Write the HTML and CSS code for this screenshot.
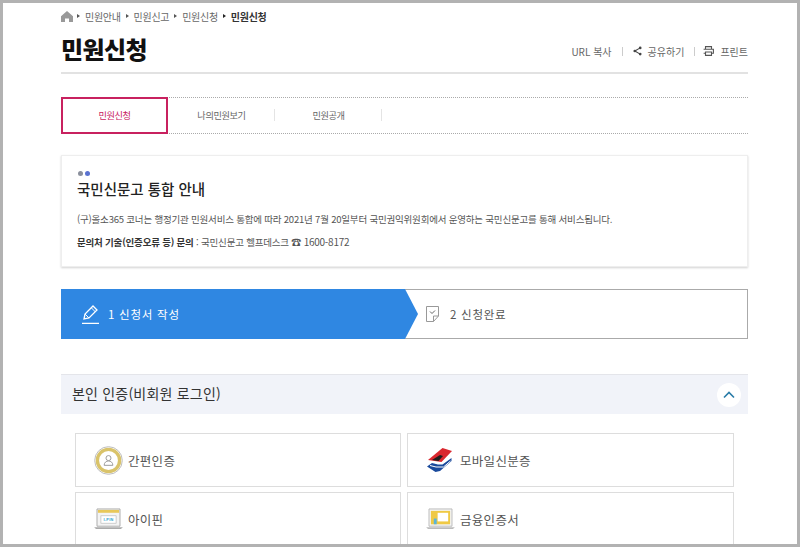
FILE: index.html
```html
<!DOCTYPE html>
<html lang="ko">
<head>
<meta charset="utf-8">
<title>민원신청</title>
<link rel="stylesheet" href="styles.css">
</head>
<body>
<div class="frame">
  <div class="page">
    <nav class="crumbs">
      <svg class="home" viewBox="0 0 12 11" width="12" height="11"><path d="M6 0 0 5.2V11h4V7.5h4V11h4V5.2z" fill="#999"/></svg>
      <span class="tri"></span><span>민원안내</span>
      <span class="tri"></span><span>민원신고</span>
      <span class="tri"></span><span>민원신청</span>
      <span class="tri dark"></span><strong>민원신청</strong>
    </nav>
    <header class="head">
      <h1>민원신청</h1>
      <div class="tools">
        <span>URL 복사</span><i class="sep"></i>
        <svg viewBox="0 0 10 10" width="9" height="10"><path d="M8 1.5 2 5l6 3.5" fill="none" stroke="#444" stroke-width="1.2"/><circle cx="8" cy="1.6" r="1.5" fill="#444"/><circle cx="2" cy="5" r="1.5" fill="#444"/><circle cx="8" cy="8.4" r="1.5" fill="#444"/></svg>
        <span class="lbl">공유하기</span><i class="sep tight"></i>
        <svg viewBox="0 0 11 10" width="11" height="10"><path d="M2.5 3V.6h6V3M.6 3.2h9.8v4H8.5M.6 7.2h1.9M2.5 6h6v3.4h-6z" fill="none" stroke="#555" stroke-width="1.1"/></svg>
        <span class="lbl">프린트</span>
      </div>
    </header>
    <div class="tabs">
      <a class="tab on">민원신청</a>
      <a class="tab">나의민원보기</a>
      <a class="tab">민원공개</a>
    </div>
    <section class="notice">
      <div class="dots"><i></i><i class="blue"></i></div>
      <h2>국민신문고 통합 안내</h2>
      <p>(구)올소365 코너는 행정기관 민원서비스 통합에 따라 2021년 7월 20일부터 국민권익위원회에서 운영하는 국민신문고를 통해 서비스됩니다.</p>
      <p class="ask"><b>문의처 기술(인증오류 등) 문의</b> : 국민신문고 헬프데스크 <span class="tel">☎ 1600-8172</span></p>
    </section>
    <div class="steps">
      <div class="step now">
        <svg viewBox="0 0 18 19" width="18" height="19"><path d="M0 18.3h17" fill="none" stroke="#fff" stroke-width="1.3"/><path d="M2 14l1-5L11 1l4 4-8 8z" fill="none" stroke="#fff" stroke-width="1.3"/><path d="M9.5 3l4 4M3 9l4 4" stroke="#fff"/></svg>
        <span>1 신청서 작성</span>
      </div>
      <div class="step next">
        <svg viewBox="0 0 13 16" width="13" height="16"><path d="M.5.5h12v9.5L7.5 15.5H.5z" fill="none" stroke="#999"/><path d="M7.5 15.5V10H12.500" fill="none" stroke="#999"/><path d="M4 5.500l2 2 3-3" fill="none" stroke="#666"/></svg>
        <span>2 신청완료</span>
      </div>
    </div>
    <div class="acc">
      <span class="acc-title">본인 인증(비회원 로그인)</span>
      <span class="acc-btn"><svg viewBox="0 0 12 8" width="12" height="8"><path d="M1 6.500 6 1.500l5 5" fill="none" stroke="#2a7ca8" stroke-width="1.6"/></svg></span>
    </div>
    <div class="opts">
      <a class="opt">
        <span class="slot"><svg viewBox="0 0 30 30" width="29" height="29"><circle cx="15" cy="15" r="14.300" fill="#fff" stroke="#bbb"/><circle cx="15" cy="15" r="11.500" fill="none" stroke="#d9c36a" stroke-width="3.500"/><circle cx="15" cy="12.500" r="2.600" fill="none" stroke="#999"/><path d="M10.500 20c0-6 9-6 9 0z" fill="none" stroke="#999"/></svg></span>
        <span>간편인증</span>
      </a>
      <a class="opt">
        <span class="slot"><svg class="mob" viewBox="0 0 25 24" width="25" height="24"><path d="M15.500 0l9.500 3L14.500 14 1 12z" fill="#d9272e"/><path d="M5 12l8-5 3 1-4.500 5z" fill="#1d1d1d"/><path d="M0 18.500l5-3.500 6 1.500h4.500L24.500 10v3L13 23l-4.500 1z" fill="#1a4a9c"/><path d="M3 17.500l6 1.500h7.500l7-6" fill="none" stroke="#fff"/></svg></span>
        <span>모바일신분증</span>
      </a>
      <a class="opt">
        <span class="slot"><svg viewBox="0 0 30 24" width="29" height="23"><path d="M3 1h24v18H3z" fill="#f4f4f4" stroke="#aaa"/><path d="M4 2h22v3H4z" fill="#e8c85a"/><path d="M7 8h16v8H7z" fill="#fff" stroke="#ccc"/><text x="15" y="14" class="pin">I-PIN</text><path d="M0 20h30l-2 2H2z" fill="#aaa"/></svg></span>
        <span>아이핀</span>
      </a>
      <a class="opt">
        <span class="slot"><svg viewBox="0 0 30 24" width="29" height="23"><path d="M3 1h24v18H3z" fill="#f4f4f4" stroke="#bbb"/><path d="M5 3h20v14H5z" fill="#efc944"/><path d="M12 5h11v9H12z" fill="#fff"/><path d="M8 11h3v6H8z" fill="#5bb5d8"/><path d="M0 20h30l-2 2H2z" fill="#bbb"/></svg></span>
        <span>금융인증서</span>
      </a>
    </div>
  </div>
</div>
</body>
</html>
```

FILE: styles.css
```css
* { box-sizing: border-box; }
html, body { margin: 0; padding: 0; }
body { font-family: "Noto Sans CJK KR", "Noto Sans", sans-serif; background: #fff; color: #333; }
.frame { width: 800px; height: 547px; border: 3px solid #b2b2b2; overflow: hidden; background: #fff; }
.page { width: 687px; margin-left: 58px; }

.crumbs { height: 26px; display: flex; align-items: center; font-size: 10px; color: #666; letter-spacing: -.3px; }
.crumbs strong { color: #333; font-weight: 700; }
.home { margin-right: -1px; }
.tri { width: 0; height: 0; border-left: 3px solid #555; border-top: 2.5px solid transparent; border-bottom: 2.5px solid transparent; margin: 0 5px; }
.tri.dark { border-left-color: #222; }

.head { height: 45px; display: flex; justify-content: space-between; align-items: center; border-bottom: 2px solid #e2e2e2; padding-bottom: 4px; }
h1 { margin: 0; font-size: 24px; font-weight: 900; color: #111; letter-spacing: -.6px; line-height: 30px; }
.tools { display: flex; align-items: center; font-size: 10px; color: #666; margin-top: 5px; }
.tools .lbl { margin-left: 6px; }
.sep { width: 1px; height: 9px; background: #ccc; margin: 0 10px; }
.sep.tight { margin-right: 8px; }

.tabs { margin-top: 23px; height: 37px; display: flex; border-top: 1px dotted #aaa; border-bottom: 1px dotted #aaa; }
.tab { width: 107px; height: 37px; margin: -1px 0; padding-bottom: 2px; display: flex; align-items: center; justify-content: center; font-size: 9.2px; color: #666; letter-spacing: -.4px; position: relative; }
.tab + .tab::after { content: ""; position: absolute; right: 0; top: 12px; height: 12px; width: 1px; background: #e4e4e4; }
.tab.on { border: 2px solid #c8215f; color: #c8215f; }

.notice { margin-top: 21px; height: 112px; padding: 15px 15px 0; border: 1px solid #eee; box-shadow: 0 1px 2px rgba(0,0,0,.18); }
.dots { display: flex; gap: 2px; height: 7px; padding-left: 1px; }
.dots i { width: 5px; height: 5px; border-radius: 50%; background: #8a8f9c; }
.dots i.blue { background: #5a72d0; }
h2 { margin: 1px 0 14px; font-size: 14.500px; font-weight: 500; color: #222; line-height: 20px; }
.notice p { margin: 0 0 9px; font-size: 9.5px; color: #555; line-height: 13px; letter-spacing: -.2px; white-space: nowrap; }
.notice b { color: #333; }
.tel { font-size: 10px; letter-spacing: -.25px; }

.steps { margin-top: 22px; height: 50px; display: flex; border: 1px solid #aaa; border-left: 0; position: relative; }
.step { display: flex; align-items: center; font-size: 11.5px; letter-spacing: .75px; }
.step.now { width: 357px; margin: -1px 0; height: 50px; padding-left: 21px; gap: 8px; background: #2f87e2; color: #fff; clip-path: polygon(0 0, 344px 0, 357px 25px, 344px 100%, 0 100%); }
.step.next { padding-left: 8px; gap: 11px; color: #555; }

.acc { margin-top: 35px; height: 40px; padding: 0 7px 0 11px; display: flex; align-items: center; justify-content: space-between; background: #f1f3f9; border-top: 1px solid #e4e5ea; font-size: 14px; color: #333; letter-spacing: .2px; }
.acc-title { margin-top: -4px; }
.acc-btn { width: 24px; height: 24px; border-radius: 50%; background: #fff; display: flex; align-items: center; justify-content: center; }

.opts { margin: 19px 14px 0; display: grid; grid-template-columns: 326px 327px; column-gap: 6px; row-gap: 5px; }
.opt { height: 54px; padding-left: 18px; display: flex; align-items: center; border: 1px solid #ddd; font-size: 12.500px; color: #555; letter-spacing: .3px; }
.slot { width: 34px; display: flex; align-items: center; }
.mob { margin-left: 1px; }
.pin { font-size: 4px; font-weight: 700; fill: #2f9fd0; text-anchor: middle; font-family: "Liberation Sans", sans-serif; }
```
